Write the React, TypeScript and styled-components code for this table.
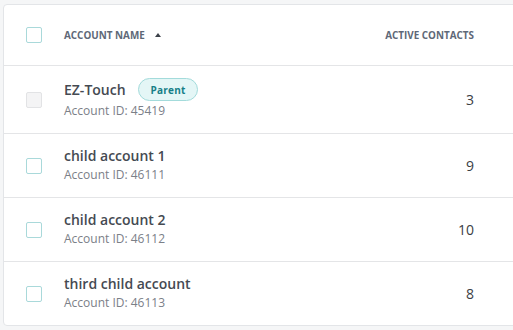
import styled, { createGlobalStyle } from 'styled-components';

const GlobalStyle = createGlobalStyle`
    html, body {
        margin: 0;
        padding: 0;
        background: #f5f6f7;
        overflow: hidden;
    }
    body {
        font-family: 'Open Sans', 'Liberation Sans', sans-serif;
    }
`;

const StyledPage = styled.div`
    padding: 4px 0 0 3px;
`;

const StyledCard = styled.div`
    width: 560px;
    background: #ffffff;
    border: solid 1px #e3e5e8;
    border-radius: 4px;
    overflow: hidden;
`;

const StyledRow = styled.div<{ $header?: boolean }>`
    display: grid;
    grid-template-columns: 38px 1fr auto;
    align-items: center;
    padding: 0 90px 0 22px;
    min-height: ${({ $header }) => ($header ? '61px' : '63px')};
    box-sizing: border-box;
    border-bottom: solid 1px #e4e5e7;

    &:last-child {
        border-bottom: none;
    }
`;

const StyledCheckbox = styled.span<{ $disabled?: boolean }>`
    display: block;
    width: 16px;
    height: 16px;
    box-sizing: border-box;
    border-radius: 2px;
    border: solid 1px ${({ $disabled }) => ($disabled ? '#e2e3e5' : '#a9d9da')};
    background: ${({ $disabled }) => ($disabled ? '#f4f4f5' : '#ffffff')};
`;

const StyledHeadLabel = styled.span`
    display: flex;
    align-items: center;
    gap: 10px;
    font-size: 9.9px;
    font-weight: 700;
    color: #5e6877;
    text-transform: uppercase;
`;

const StyledSortArrow = styled.span`
    width: 0;
    height: 0;
    border-left: 3.5px solid transparent;
    border-right: 3.5px solid transparent;
    border-bottom: 4px solid #3c4149;
    margin-top: -1px;
`;

const StyledAccount = styled.div`
    display: flex;
    flex-direction: column;
    padding: 11px 0 13px;
`;

const StyledNameLine = styled.div`
    display: flex;
    align-items: center;
    gap: 12px;
    min-height: 21px;
    font-size: 14px;
    font-weight: 600;
    color: #454a52;
`;

const StyledBadge = styled.span`
    display: inline-flex;
    align-items: center;
    height: 23px;
    margin: 1px 0;
    padding: 0 12px;
    box-sizing: border-box;
    border-radius: 12px;
    border: solid 1px #a3dbdb;
    background: #e4f6f6;
    color: #177f88;
    font-size: 10px;
    font-weight: 700;
    letter-spacing: 0.2px;
`;

const StyledAccountId = styled.div`
    font-size: 12px;
    line-height: 18px;
    color: #7b8088;
`;

const StyledCount = styled.span`
    font-size: 14px;
    color: #3a3e44;
    text-align: right;
    margin-top: -1px;
`;

interface Account {
    name: string;
    id: number;
    contacts: number;
    parent?: boolean;
}

const accounts: Account[] = [
    { name: 'EZ-Touch', id: 45419, contacts: 3, parent: true },
    { name: 'child account 1', id: 46111, contacts: 9 },
    { name: 'child account 2', id: 46112, contacts: 10 },
    { name: 'third child account', id: 46113, contacts: 8 },
];

export default function App() {
    const renderRow = (item: Account) => (
        <StyledRow key={item.id}>
            <StyledCheckbox $disabled={item.parent} />
            <StyledAccount>
                <StyledNameLine>
                    {item.name}
                    {item.parent && <StyledBadge>Parent</StyledBadge>}
                </StyledNameLine>
                <StyledAccountId>Account ID: {item.id}</StyledAccountId>
            </StyledAccount>
            <StyledCount>{item.contacts}</StyledCount>
        </StyledRow>
    );

    return (
        <StyledPage>
            <GlobalStyle />
            <StyledCard>
                <StyledRow $header>
                    <StyledCheckbox />
                    <StyledHeadLabel>
                        Account name
                        <StyledSortArrow />
                    </StyledHeadLabel>
                    <StyledHeadLabel>Active contacts</StyledHeadLabel>
                </StyledRow>
                {accounts.map(renderRow)}
            </StyledCard>
        </StyledPage>
    );
}
